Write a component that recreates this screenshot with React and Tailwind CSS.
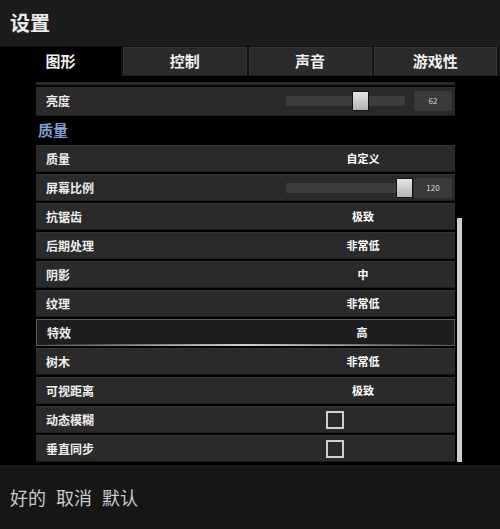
import React from 'react';

const font = { fontFamily: '"Noto Sans CJK SC", "Noto Sans", sans-serif' };

const tabs = ['图形', '控制', '声音', '游戏性'];

const rows = [
  { label: '质量', value: '自定义' },
  { label: '屏幕比例', slider: 110, num: '120' },
  { label: '抗锯齿', value: '极致' },
  { label: '后期处理', value: '非常低' },
  { label: '阴影', value: '中' },
  { label: '纹理', value: '非常低' },
  { label: '特效', value: '高', active: true },
  { label: '树木', value: '非常低' },
  { label: '可视距离', value: '极致' },
  { label: '动态模糊', check: true },
  { label: '垂直同步', check: true },
];

function Slider({ pos, num }) {
  return (
    <div className="flex items-center h-full pl-[15px]">
      <div className="relative w-[119px] h-[10px] bg-[#3d3d3d] rounded-[1px]">
        <div
          className="absolute top-[-5px] w-[17px] h-[20px] bg-gradient-to-b from-[#e6e6e6] to-[#b4b4b4] border border-[#111] rounded-[1px]"
          style={{ left: `${pos}px` }}
        />
      </div>
      <div className="ml-[9px] w-[38px] h-[20px] bg-[#3a3a3a] rounded-[2px] flex items-center justify-center text-[8px] text-[#ddd]">
        {num}
      </div>
    </div>
  );
}

function Row({ row }) {
  const base = row.active
    ? 'bg-[#1e1e1e] border border-[#5c5c5c]'
    : 'bg-[#2a2a2a] border-t border-t-[#333] border-b border-b-[#1a1a1a]';
  return (
    <div className={`relative h-[27px] flex items-center ${base}`}>
      <div className="flex-1 pl-[10px] text-[12px] font-bold text-[#eee]">{row.label}</div>
      <div className="w-[184px] h-full flex items-center">
        {row.value && (
          <div className="w-full text-center text-[11px] font-bold text-white">{row.value}</div>
        )}
        {row.slider !== undefined && <Slider pos={row.slider} num={row.num} />}
        {row.check && (
          <div className="ml-[55px] w-[18px] h-[18px] border-2 border-[#cfcfcf]" />
        )}
      </div>
      {row.active && (
        <div className="absolute left-0 right-0 bottom-[-1px] h-[2px] bg-gradient-to-r from-transparent via-[#d0d0d0] to-transparent" />
      )}
    </div>
  );
}

export default function App() {
  return (
    <div className="w-[500px] h-[529px] bg-black flex flex-col overflow-hidden select-none" style={font}>
      <div className="h-[46px] bg-[#1c1c1c] flex items-center pl-[10px] text-[20px] font-bold text-[#ececec]">
        设置
      </div>
      <div className="h-[30px] flex bg-[#111] pt-[1px] gap-[2px] pr-[3px]">
        {tabs.map((t, i) => (
          <div
            key={t}
            className={`flex-1 flex items-center justify-center text-[15px] font-bold text-[#f0f0f0] ${
              i === 0 ? 'bg-black' : 'bg-[#2b2b2b] border border-[#363636] border-b-[#1c1c1c]'
            }`}
          >
            {t}
          </div>
        ))}
      </div>
      <div className="flex-1 flex bg-black pt-[6px]">
        <div className="ml-[36px] w-[419px] flex flex-col">
          <div className="h-[3px] bg-[#2a2a2a] mb-[2px]" />
          <div className="h-[29px] flex items-center bg-[#2a2a2a] border-b border-[#1a1a1a]">
            <div className="flex-1 pl-[10px] text-[12px] font-bold text-[#eee]">亮度</div>
            <div className="w-[184px] h-full">
              <Slider pos={66} num="62" />
            </div>
          </div>
          <div className="h-[29px] flex items-center pl-[2px] text-[15px] font-bold text-[#7f9fd0]">质量</div>
          <div className="flex flex-col gap-[2px]">
            {rows.map((r) => (
              <Row key={r.label} row={r} />
            ))}
          </div>
        </div>
        <div className="ml-[2px] flex flex-col">
          <div className="h-[136px]" />
          <div className="w-[5px] h-[244px] bg-[#cfcfcf]" />
        </div>
      </div>
      <div className="h-[64px] bg-[#161616] flex items-center pl-[10px] text-[18px] text-[#c8c8c8] gap-[10px]">
        <span>好的</span>
        <span>取消</span>
        <span>默认</span>
      </div>
    </div>
  );
}
